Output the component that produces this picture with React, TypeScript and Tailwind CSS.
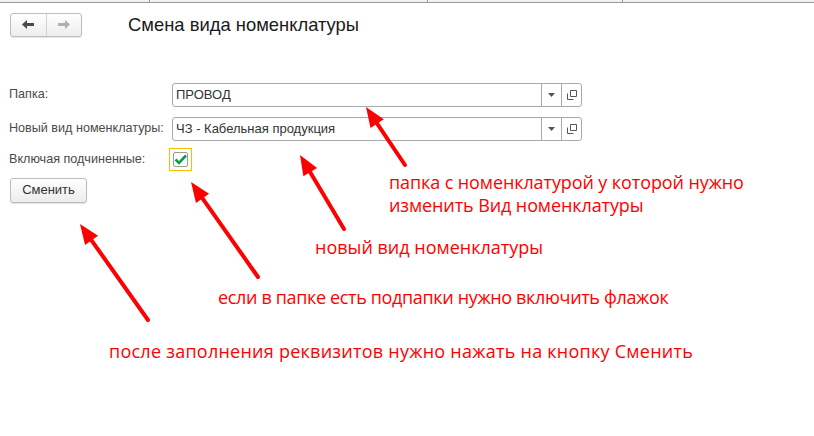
import React from "react";

const arrows = [
  { x1: 405, y1: 165, x2: 366, y2: 107 },
  { x1: 344, y1: 229, x2: 300, y2: 155 },
  { x1: 258, y1: 277, x2: 191, y2: 182 },
  { x1: 148, y1: 320, x2: 80, y2: 224 },
];

function Arrow({ x1, y1, x2, y2 }: { x1: number; y1: number; x2: number; y2: number }) {
  const dx = x2 - x1;
  const dy = y2 - y1;
  const len = Math.hypot(dx, dy);
  const ux = dx / len;
  const uy = dy / len;
  const headLen = 20;
  const headW = 8;
  const bx = x2 - ux * headLen;
  const by = y2 - uy * headLen;
  const px = -uy;
  const py = ux;
  return (
    <g>
      <line x1={x1} y1={y1} x2={bx} y2={by} stroke="#ff0000" strokeWidth={4} strokeLinecap="round" />
      <polygon
        points={`${x2},${y2} ${bx + px * headW},${by + py * headW} ${bx - px * headW},${by - py * headW}`}
        fill="#ff0000"
      />
    </g>
  );
}

function Field({ value }: { value: string }) {
  return (
    <div className="flex h-[24px] w-[410px] rounded-[3px] border border-[#a9a9a9] bg-white">
      <div className="flex flex-1 items-center pl-[3px] text-[13px] text-[#333]">{value}</div>
      <div className="flex w-[20px] items-center justify-center border-l border-[#a9a9a9]">
        <svg width="7" height="4" viewBox="0 0 7 4">
          <path d="M0 0 H7 L3.5 4 Z" fill="#555" />
        </svg>
      </div>
      <div className="flex w-[20px] items-center justify-center border-l border-[#a9a9a9]">
        <svg width="10" height="10" viewBox="0 0 10 10">
          <path d="M3.5 0.5 H9.5 V6.5 H3.5 Z" fill="none" stroke="#555" />
          <path d="M0.5 3.5 V9.5 H6.5" fill="none" stroke="#555" />
        </svg>
      </div>
    </div>
  );
}

export default function App() {
  return (
    <div
      className="relative h-[436px] w-[814px] overflow-hidden bg-white"
      style={{ fontFamily: "Arial, 'Liberation Sans', sans-serif" }}
    >
      {/* tab strip */}
      <div className="flex h-[3px] border-b border-[#9a9a9a] bg-[#f0f0f0]">
        <div className="w-[150px] border-r border-[#9a9a9a]" />
        <div className="w-[278px] border-r border-[#9a9a9a]" />
        <div className="w-[195px] border-r border-[#9a9a9a]" />
        <div className="flex-1" />
      </div>

      {/* header */}
      <div className="flex items-center pl-[10px] pt-[8px]">
        <div className="flex h-[24px] w-[72px] rounded-[3px] border border-[#bdbdbd] bg-gradient-to-b from-white to-[#ededed] shadow-[0_1px_1px_rgba(0,0,0,0.1)]">
          <div className="flex flex-1 items-center justify-center border-r border-[#d4d4d4]">
            <svg width="12" height="9" viewBox="0 0 12 9">
              <path d="M0 4.5 L5 0 V3 H12 V6 H5 V9 Z" fill="#4a4a4a" />
            </svg>
          </div>
          <div className="flex flex-1 items-center justify-center">
            <svg width="12" height="9" viewBox="0 0 12 9">
              <path d="M12 4.5 L7 0 V3 H0 V6 H7 V9 Z" fill="#b0b0b0" />
            </svg>
          </div>
        </div>
        <div className="ml-[46px] text-[18.4px] text-[#1a1a1a]">Смена вида номенклатуры</div>
      </div>

      {/* form */}
      <div className="mt-[44px] flex flex-col pl-[9px]">
        <div className="flex items-center">
          <div className="w-[163px] text-[12.6px] text-[#4a4a4a]">Папка:</div>
          <Field value="ПРОВОД" />
        </div>
        <div className="mt-[10px] flex items-center">
          <div className="w-[163px] text-[12.6px] text-[#4a4a4a]">Новый вид номенклатуры:</div>
          <Field value="ЧЗ - Кабельная продукция" />
        </div>
        <div className="mt-[7px] flex items-center">
          <div className="w-[160px] text-[12.6px] text-[#4a4a4a]">Включая подчиненные:</div>
          <div className="flex h-[23px] w-[23px] items-center justify-center border border-[#f5c000]">
            <div className="flex h-[15px] w-[15px] items-center justify-center rounded-[2px] border border-[#9a9a9a] bg-white">
              <svg width="13" height="11" viewBox="0 0 13 11">
                <path d="M1.5 5.5 L5 9 L12 1.5" fill="none" stroke="#14994a" strokeWidth="2.6" />
              </svg>
            </div>
          </div>
        </div>
        <div className="mt-[7px] flex">
          <div className="ml-[1px] flex h-[25px] w-[77px] items-center justify-center rounded-[3px] border border-[#bdbdbd] bg-gradient-to-b from-white to-[#ececec] text-[13px] text-[#333] shadow-[0_1px_1px_rgba(0,0,0,0.12)]">
            Сменить
          </div>
        </div>
      </div>

      {/* annotations */}
      <svg className="pointer-events-none absolute left-0 top-0" width="814" height="436">
        {arrows.map((a, i) => (
          <Arrow key={i} {...a} />
        ))}
      </svg>
      <div
        className="pointer-events-none absolute left-0 top-0 text-[18px] leading-[23px] text-[#ff0000]"
        style={{ fontFamily: "'Open Sans', sans-serif" }}
      >
        <div className="absolute left-[389px] top-[171px] whitespace-nowrap tracking-[-0.1px]">
          папка с номенклатурой у которой нужно
          <br />
          изменить Вид номенклатуры
        </div>
        <div className="absolute left-[315px] top-[236px] whitespace-nowrap">новый вид номенклатуры</div>
        <div className="absolute left-[218px] top-[286px] whitespace-nowrap tracking-[-0.35px]">
          если в папке есть подпапки нужно включить флажок
        </div>
        <div className="absolute left-[109px] top-[340px] whitespace-nowrap tracking-[0.25px]">
          после заполнения реквизитов нужно нажать на кнопку Сменить
        </div>
      </div>
    </div>
  );
}
